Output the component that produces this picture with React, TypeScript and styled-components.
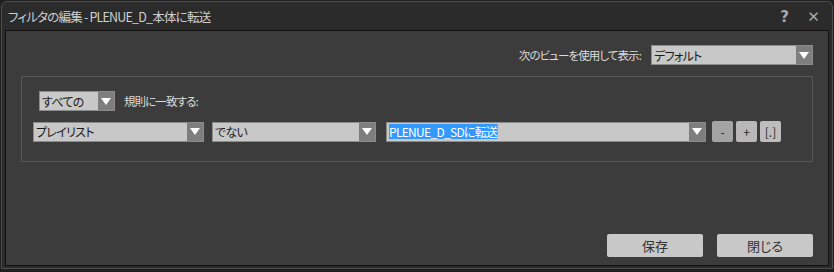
import React from 'react'
import styled, { createGlobalStyle } from 'styled-components'

const GlobalStyle = createGlobalStyle`
  html, body {
    margin: 0;
    padding: 0;
    background: #1f1f1f;
    width: 834px;
    height: 272px;
    overflow: hidden;
  }
  * {
    box-sizing: border-box;
  }
  body {
    font-family: 'Noto Sans CJK JP', 'Noto Sans', sans-serif;
    font-feature-settings: 'palt';
  }
`

const Window = styled.div`
  margin: 1px;
  width: 832px;
  height: 268px;
  display: flex;
  flex-direction: column;
  background: #2b2b2b;
  border: 1px solid #4e4e4e;
  border-radius: 6px 6px 0 0;
`

const TitleBar = styled.div`
  height: 28px;
  display: flex;
  align-items: center;
  padding: 1px 4px 0 6px;
  color: #cfcfcf;
  font-size: 12.5px;
  letter-spacing: -0.8px;
`

const Title = styled.div`
  flex: 1;
`

const TitleButton = styled.span`
  color: #a8a8a8;
  font-family: 'DejaVu Sans', sans-serif;
  font-weight: bold;
  font-size: 15px;
  letter-spacing: 0;
  width: 29px;
  text-align: center;
`

const Content = styled.div`
  flex: 1;
  margin: 0 3px 2px 3px;
  border: 1px solid #111;
  background: #3c3c3c;
  display: flex;
  flex-direction: column;
  padding: 14px 15px 8px 15px;
`

const TopRow = styled.div`
  display: flex;
  justify-content: flex-end;
  align-items: center;
  gap: 10px;
  height: 20px;
`

const Label = styled.span`
  color: #dcdcdc;
  font-size: 11.5px;
  letter-spacing: -0.9px;
  white-space: nowrap;
`

const Group = styled.div`
  margin-top: 11px;
  border: 1px solid #575757;
  padding: 14px 16px 19px 11px;
  display: flex;
  flex-direction: column;
  gap: 10px;
`

const Row = styled.div<{ $indent?: number }>`
  display: flex;
  align-items: center;
  padding-left: ${p => p.$indent || 0}px;
`

const Select = styled.div<{ $w: number; $gap?: number }>`
  width: ${p => p.$w}px;
  height: 20px;
  margin-right: ${p => p.$gap || 0}px;
  display: flex;
  background: #c8c8c8;
  border: 1px solid #8c8c8c;
  flex-shrink: 0;
`

const SelectText = styled.div`
  flex: 1;
  display: flex;
  align-items: center;
  padding-left: 2px;
  font-size: 12px;
  letter-spacing: -0.7px;
  color: #1a1a1a;
  overflow: hidden;
  white-space: nowrap;
`

const Highlight = styled.span`
  background: #3399ff;
  color: #fff;
  line-height: 15px;
  border-right: 1px solid #ff8a00;
`

const Arrow = styled.div`
  width: 16px;
  background: #7e7e7e;
  display: flex;
  align-items: center;
  justify-content: center;
  &::after {
    content: '';
    border-left: 5px solid transparent;
    border-right: 5px solid transparent;
    border-top: 7px solid #fff;
  }
`

const SmallButton = styled.div<{ $bg: string }>`
  width: 21px;
  height: 21px;
  margin-left: 3px;
  background: ${p => p.$bg};
  border-radius: 2px;
  display: flex;
  align-items: center;
  justify-content: center;
  font-size: 12px;
  color: #2a2a2a;
`

const Spacer = styled.div`
  flex: 1;
`

const Footer = styled.div`
  display: flex;
  justify-content: flex-end;
  gap: 14px;
`

const Button = styled.div`
  width: 96px;
  height: 23px;
  background: #c8c8c8;
  border-radius: 2px;
  display: flex;
  align-items: center;
  justify-content: center;
  font-size: 13px;
  color: #333;
`

const App: React.FC = () => {
  return (
    <>
      <GlobalStyle />
      <Window>
        <TitleBar>
          <Title>フィルタの編集 - PLENUE_D_本体に転送</Title>
          <TitleButton>?</TitleButton>
          <TitleButton>✕</TitleButton>
        </TitleBar>
        <Content>
          <TopRow>
            <Label>次のビューを使用して表示:</Label>
            <Select $w={162}>
              <SelectText>デフォルト</SelectText>
              <Arrow />
            </Select>
          </TopRow>
          <Group>
            <Row $indent={6}>
              <Select $w={76} $gap={9}>
                <SelectText>すべての</SelectText>
                <Arrow />
              </Select>
              <Label>規則に一致する:</Label>
            </Row>
            <Row>
              <Select $w={171} $gap={8}>
                <SelectText>プレイリスト</SelectText>
                <Arrow />
              </Select>
              <Select $w={164} $gap={10}>
                <SelectText>でない</SelectText>
                <Arrow />
              </Select>
              <Select $w={320} $gap={3}>
                <SelectText>
                  <Highlight>PLENUE_D_SDに転送</Highlight>
                </SelectText>
                <Arrow />
              </Select>
              <SmallButton $bg="#a4a4a4">-</SmallButton>
              <SmallButton $bg="#b8b8b8">+</SmallButton>
              <SmallButton $bg="#bdbdbd">[.]</SmallButton>
            </Row>
          </Group>
          <Spacer />
          <Footer>
            <Button>保存</Button>
            <Button>閉じる</Button>
          </Footer>
        </Content>
      </Window>
    </>
  )
}

export default App
